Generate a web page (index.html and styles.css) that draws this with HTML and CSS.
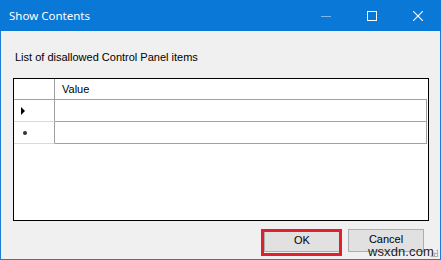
FILE: index.html
```html
<!DOCTYPE html>
<html lang="en">
<head>
    <meta charset="UTF-8">
    <title>Show Contents</title>
    <link rel="stylesheet" href="styles.css">
</head>
<body>
    <div class="window">
        <div class="titlebar">
            <span class="title">Show Contents</span>
            <div class="caption-buttons">
                <span class="caption-btn minimize">
                    <svg width="10" height="10" viewBox="0 0 10 10"><path d="M0 5.5h10" stroke="#7fb6e8" stroke-width="1"/></svg>
                </span>
                <span class="caption-btn">
                    <svg width="10" height="10" viewBox="0 0 10 10"><rect x="0.5" y="0.5" width="9" height="9" fill="none" stroke="#fff" stroke-width="1"/></svg>
                </span>
                <span class="caption-btn">
                    <svg width="10" height="10" viewBox="0 0 10 10"><path d="M0 0L10 10M10 0L0 10" stroke="#fff" stroke-width="1.1"/></svg>
                </span>
            </div>
        </div>

        <div class="client">
            <p class="prompt">List of disallowed Control Panel items</p>

            <div class="grid">
                <div class="row header">
                    <div class="rowhead"></div>
                    <div class="cell">Value</div>
                </div>
                <div class="row">
                    <div class="rowhead"><span class="arrow"></span></div>
                    <div class="cell"></div>
                </div>
                <div class="row">
                    <div class="rowhead"><span class="star"></span></div>
                    <div class="cell"></div>
                </div>
            </div>

            <div class="actions">
                <button class="btn ok">OK<span class="highlight"></span></button>
                <button class="btn cancel">Cancel</button>
            </div>

            <span class="grip"></span>
            <span class="watermark">wsxdn.com</span>
        </div>
    </div>
</body>
</html>
```

FILE: styles.css
```css
/* Page */
body {
    margin: 0;
    padding: 0;
    font-family: 'Liberation Sans', Arial, sans-serif;
    font-size: 11px;
    color: #000;
}

/* Dialog window */
.window {
    width: 441px;
    height: 260px;
    box-sizing: border-box;
    border: 1px solid #1a7ed6;
    border-top: none;
    background-color: #f0f0f0;
    display: flex;
    flex-direction: column;
}

.titlebar {
    height: 31px;
    flex: none;
    margin: 0 -1px;
    background-color: #0a78d6;
    color: #fff;
    display: flex;
    align-items: center;
}

.title {
    padding-left: 9px;
    font-family: 'Noto Sans', 'Open Sans', sans-serif;
    font-size: 11.5px;
    padding-bottom: 1px;
}

.caption-buttons {
    margin-left: auto;
    display: flex;
    height: 100%;
}

.caption-btn {
    width: 46px;
    display: flex;
    align-items: center;
    justify-content: center;
}

.caption-btn svg {
    display: block;
}

/* Client area */
.client {
    flex: 1;
    position: relative;
    padding: 0 11px 0 12px;
}

.prompt {
    margin: 20px 0 0 2px;
    line-height: 13px;
}

/* Data grid */
.grid {
    margin-top: 14px;
    height: 143px;
    box-sizing: border-box;
    border: 1px solid #000;
    background-color: #fff;
}

.row {
    display: flex;
    height: 22px;
}

.row.header {
    height: 21px;
}

.rowhead {
    width: 40px;
    border-right: 1px solid #a0a0a0;
    border-bottom: 1px solid #dadada;
    display: flex;
    align-items: center;
}

.row.header .rowhead {
    border-bottom-color: #a0a0a0;
}

.cell {
    width: 371px;
    border-right: 1px solid #a0a0a0;
    border-bottom: 1px solid #a0a0a0;
    display: flex;
    align-items: center;
}

.row.header .cell {
    border-right: none;
    padding-left: 7px;
    width: 365px;
}

.arrow {
    margin-left: 7px;
    width: 0;
    height: 0;
    border-top: 4px solid transparent;
    border-bottom: 4px solid transparent;
    border-left: 4px solid #000;
}

.star {
    margin-left: 9px;
    margin-top: 1px;
    width: 4px;
    height: 4px;
    border-radius: 50%;
    background-color: #333;
}

/* Buttons */
.actions {
    display: flex;
    justify-content: flex-end;
    gap: 8px;
    margin-top: 8px;
    padding-right: 5px;
}

.btn {
    position: relative;
    width: 76px;
    height: 23px;
    margin: 0;
    padding: 0;
    border: 1px solid #adadad;
    background-color: #e1e1e1;
    font-family: 'Liberation Sans', Arial, sans-serif;
    font-size: 11px;
    line-height: 13px;
    color: #000;
}

.btn.cancel {
    padding-bottom: 2px;
}

.highlight {
    position: absolute;
    left: -4px;
    right: -3px;
    top: -1px;
    bottom: -5px;
    border: 3px solid #e0202c;
}

.grip {
    position: absolute;
    right: 2px;
    bottom: 2px;
    width: 8px;
    height: 8px;
    background-image: radial-gradient(circle, #b0b0b0 1px, transparent 1.2px);
    background-size: 3px 3px;
    clip-path: polygon(100% 0, 100% 100%, 0 100%);
}

.watermark {
    position: absolute;
    left: 367px;
    top: 216px;
    font-size: 13px;
    line-height: 9px;
    color: #1e1e1e;
    letter-spacing: 0.1px;
}
```
